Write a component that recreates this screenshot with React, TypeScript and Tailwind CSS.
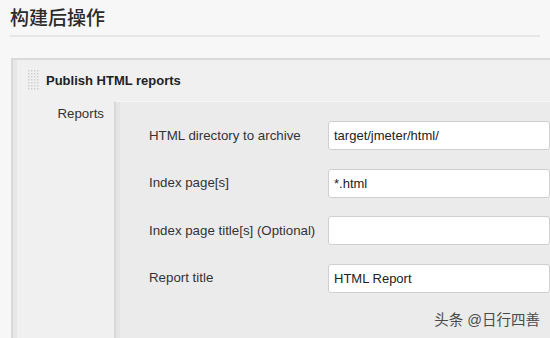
import React from "react";

const rows = [
  { label: "HTML directory to archive", value: "target/jmeter/html/" },
  { label: "Index page[s]", value: "*.html" },
  { label: "Index page title[s] (Optional)", value: "" },
  { label: "Report title", value: "HTML Report" },
];

function Grip() {
  const dots = [];
  for (let r = 0; r < 7; r++) {
    for (let c = 0; c < 4; c++) {
      dots.push(<rect key={`${r}-${c}`} x={c * 3} y={r * 3} width="1.5" height="1.5" fill="#cfcfd2" />);
    }
  }
  return (
    <svg width="12" height="21" viewBox="0 0 12 21" className="shrink-0">
      {dots}
    </svg>
  );
}

export default function App() {
  return (
    <div
      className="relative w-[550px] h-[338px] overflow-hidden bg-[#f7f7f8] text-[#333]"
      style={{ fontFamily: '"Liberation Sans", "Noto Sans CJK SC", sans-serif' }}
    >
      <div className="mx-[10px] pt-[4px] h-[37px] border-b-2 border-[#e6e6e8]">
        <h2 className="text-[19px] leading-[30px] font-medium text-[#2b2b2b]">构建后操作</h2>
      </div>

      <div className="ml-[11px] mt-[21px] h-[300px] border-t-2 border-l-2 border-[#d9d9db] bg-[#f0f0f1] shadow-[inset_4px_0_0_#e7e7e8]">
        <div className="flex items-center h-[41px] pl-[15px] gap-[6px]">
          <Grip />
          <span className="text-[13px] font-bold text-[#222]">Publish HTML reports</span>
        </div>

        <div className="flex">
          <div className="w-[101px] shrink-0 pr-[10px] pt-[3px] text-right text-[13.3px] leading-[20px]">
            Reports
          </div>
          <div className="flex-1 h-[260px] border-l-2 border-t border-l-[#d9d9db] border-t-[#f6f6f7] bg-[#ebebec] shadow-[inset_4px_0_0_#e4e4e5] pl-[33px] pt-[10px]">
            {rows.map((r) => (
              <div key={r.label} className="flex items-center h-[47.5px]">
                <div className="w-[179px] shrink-0 whitespace-nowrap text-[13.3px]">{r.label}</div>
                <div className="flex-1 h-[29px] bg-white border border-[#cfcfd1] rounded-[3px] pl-[5px] flex items-center text-[13px] text-[#222]">
                  {r.value}
                </div>
              </div>
            ))}
          </div>
        </div>
      </div>

      <div className="absolute right-[10px] bottom-[6px] text-[14.5px] text-[#4a4a4a]">头条 @日行四善</div>
    </div>
  );
}
